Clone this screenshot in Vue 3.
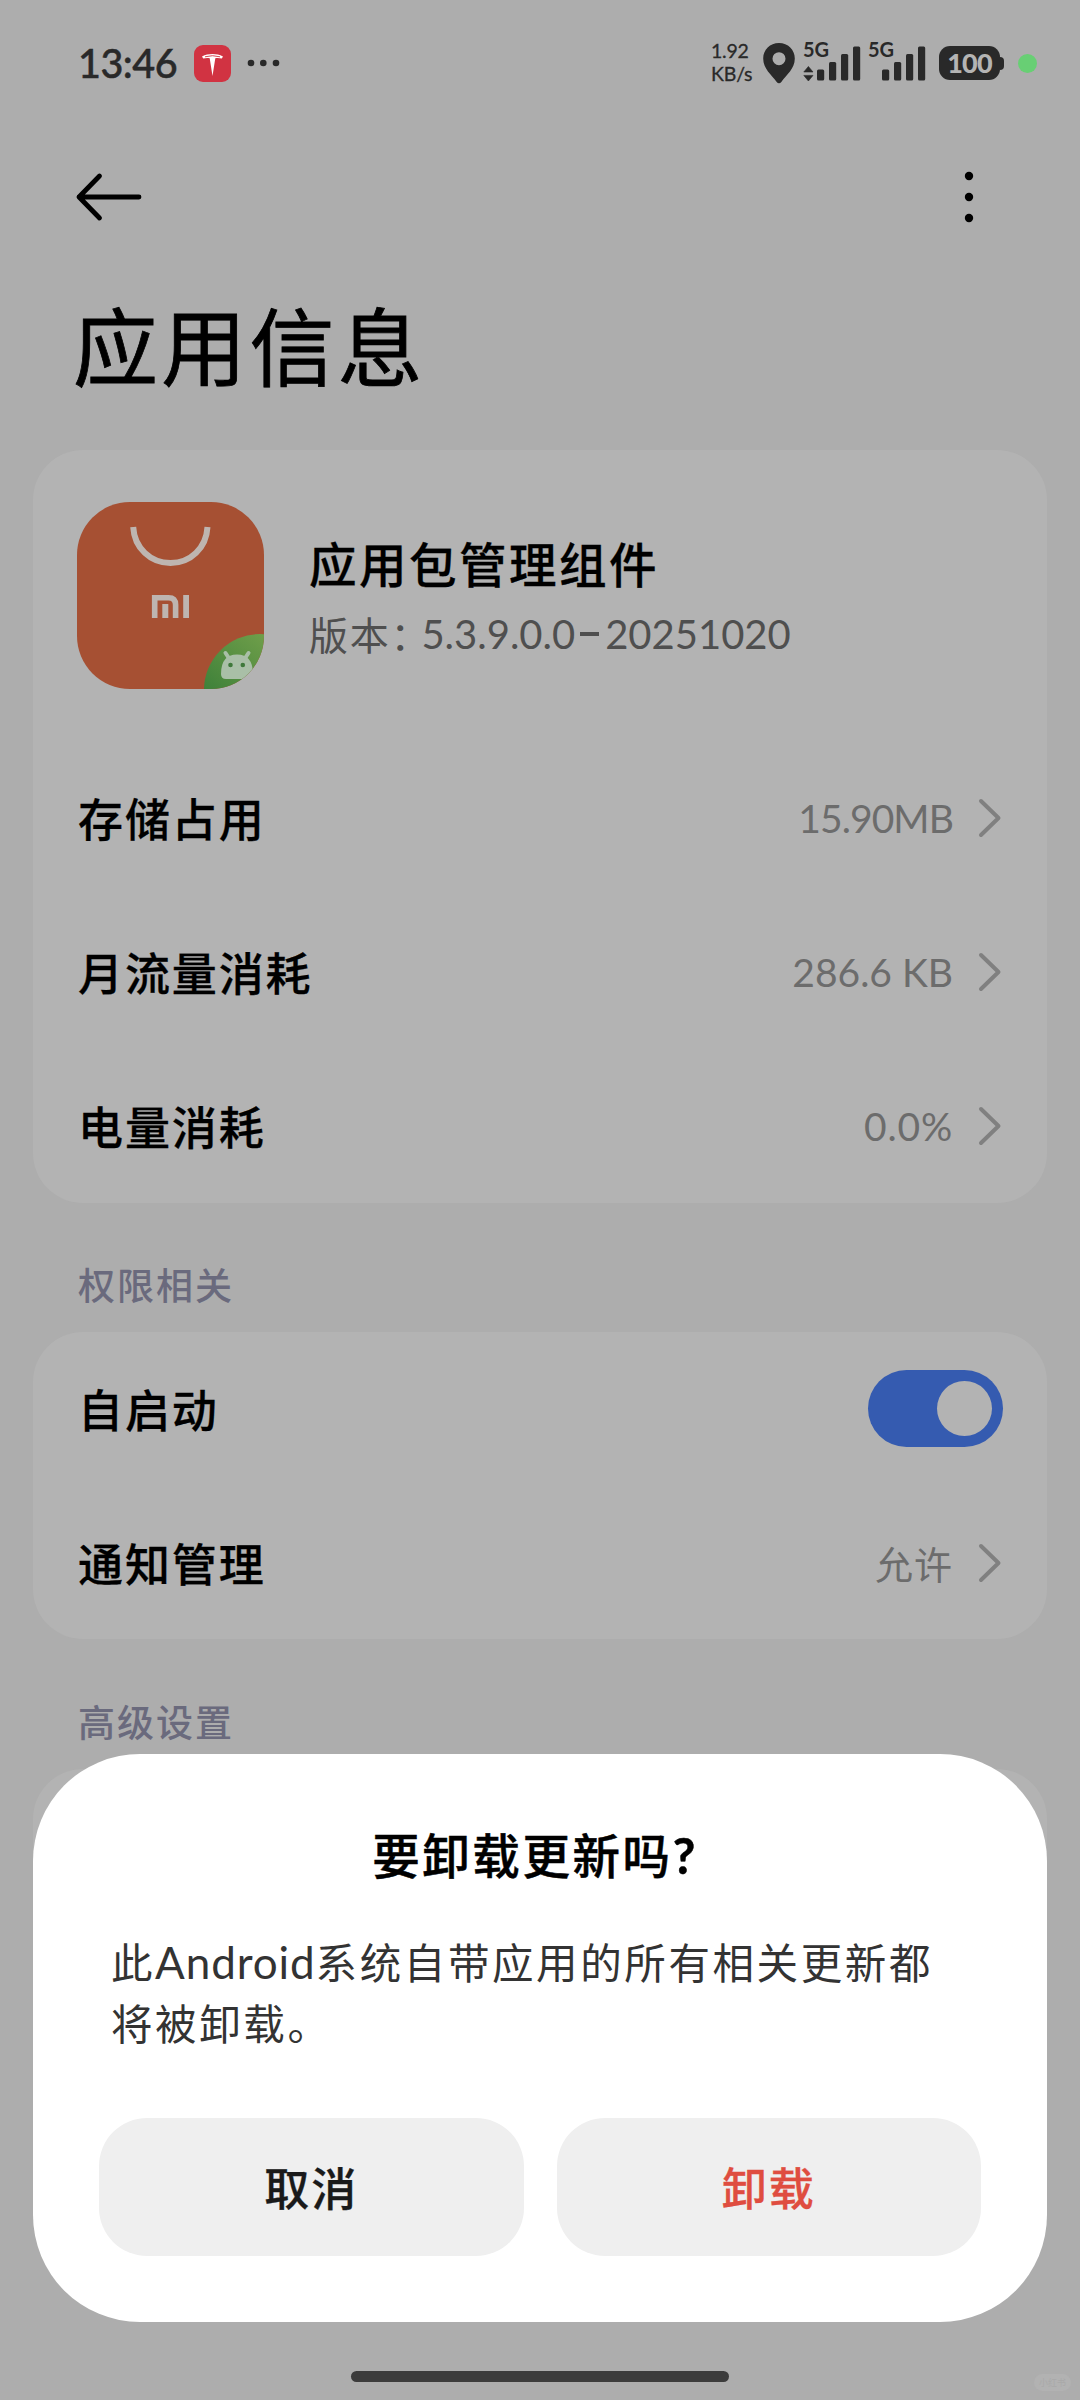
<script setup>
const usage = [
  { label: '存储占用', value: '15.90MB', spacing: '-0.9px' },
  { label: '月流量消耗', value: '286.6 KB', spacing: '0px' },
  { label: '电量消耗', value: '0.0%', spacing: '0.8px' },
]
const bars = [
  { x: 14, h: 11 },
  { x: 26, h: 18.5 },
  { x: 38, h: 26.5 },
  { x: 50, h: 34 },
]
</script>

<template>
  <div class="screen">
    <header class="status">
      <span class="time">13:46</span>
      <svg class="tesla" viewBox="0 0 37 37">
        <rect width="37" height="37" rx="9" fill="#d13342" />
        <path d="M8 11.4C14.5 8.2 22.5 8.2 29 11.4L27.8 13.6C25.6 12.9 23.4 12.8 21.3 13.2L18.5 31L15.7 13.2C13.6 12.8 11.4 12.9 9.2 13.6Z" fill="#fff" />
        <path d="M11 11.8Q18.5 9.6 26 11.8" fill="none" stroke="#d13342" stroke-width="0.9" />
      </svg>
      <svg class="more" viewBox="0 0 34 8">
        <circle cx="4" cy="4" r="3.3" /><circle cx="16.3" cy="4" r="3.3" /><circle cx="29" cy="4" r="3.3" />
      </svg>
      <div class="speed"><span>1.92</span><span>KB/s</span></div>
      <svg class="pin" viewBox="0 0 32 41">
        <path d="M16 0C7 0 0.2 6.8 0.2 15.5C0.2 26 8.5 31.5 13.7 39C15 40.8 17 40.8 18.3 39C23.5 31.5 31.8 26 31.8 15.5C31.8 6.8 25 0 16 0ZM16 9.2A6.5 6.5 0 1 1 16 22.2A6.5 6.5 0 1 1 16 9.2Z" fill-rule="evenodd" />
      </svg>
      <div class="signal">
        <span>5G</span>
        <svg viewBox="0 0 58 38">
          <path d="M0.8 29L5.4 23.4L10 29ZM0.8 32.4L5.4 38L10 32.4Z" stroke="#292929" stroke-linejoin="round" stroke-width="0.6" />
          <rect v-for="b in bars" :key="b.x" :x="b.x" :y="37.5 - b.h" width="7.2" :height="b.h" rx="1.5" />
        </svg>
      </div>
      <div class="signal second">
        <span>5G</span>
        <svg viewBox="0 0 58 38">
          <rect v-for="b in bars" :key="b.x" :x="b.x" :y="37.5 - b.h" width="7.2" :height="b.h" rx="1.5" />
        </svg>
      </div>
      <div class="battery"><span>100</span></div>
      <i class="tip"></i>
      <i class="live"></i>
    </header>

    <nav class="bar">
      <svg class="back" viewBox="0 0 66 48">
        <path d="M63 24H3M23.500 3L3 24L23.500 45" fill="none" stroke="#000" stroke-width="4.8" stroke-linecap="round" stroke-linejoin="round" />
      </svg>
      <svg class="menu" viewBox="0 0 10 52">
        <circle cx="5" cy="5" r="4.2" /><circle cx="5" cy="26" r="4.2" /><circle cx="5" cy="47" r="4.2" />
      </svg>
    </nav>

    <h1>应用信息</h1>

    <section class="card first">
      <div class="app">
        <svg class="logo" viewBox="0 0 187 187">
          <defs>
            <clipPath id="tile"><rect width="187" height="187" rx="53" /></clipPath>
            <linearGradient id="leaf" x1="0.1" y1="0.6" x2="0.6" y2="0">
              <stop offset="0" stop-color="#3d8039" /><stop offset="1" stop-color="#72a04b" />
            </linearGradient>
          </defs>
          <g clip-path="url(#tile)">
            <rect width="187" height="187" fill="#a65033" />
            <path d="M56.2 25C57.4 46 73.5 61 93.5 61S129.3 46 130.5 25" fill="none" stroke="#beb5b0" stroke-width="6" />
            <path d="M77.7 116V95.7H91.5Q98.6 95.7 98.6 102.8V116" fill="none" stroke="#beb5b0" stroke-width="5.6" />
            <rect x="85.3" y="102" width="6" height="14" fill="#beb5b0" />
            <rect x="106.2" y="93" width="5.8" height="23" fill="#beb5b0" />
            <circle cx="183" cy="188" r="56" fill="url(#leaf)" />
            <path d="M144 172Q144 152.500 160 152.500T176 172Q176 177 171 177H149Q144 177 144 172Z" fill="#a9bfa7" />
            <path d="M148.500 151L152.500 157M171.500 151L167.500 157" stroke="#a9bfa7" stroke-width="4" stroke-linecap="round" />
            <circle cx="153.500" cy="163" r="2.3" fill="#3f793b" /><circle cx="165.800" cy="163" r="2.3" fill="#3f793b" />
          </g>
        </svg>
        <div class="meta">
          <span class="name">应用包管理组件</span>
          <span class="version">版本：<b>5.3.9.0.0<i></i>20251020</b></span>
        </div>
      </div>
      <div v-for="r in usage" :key="r.label" class="row">
        <span class="label">{{ r.label }}</span>
        <span class="value" :style="{ letterSpacing: r.spacing }">{{ r.value }}</span>
        <svg class="chev" viewBox="0 0 22 38"><path d="M2 2L19.500 19L2 36" /></svg>
      </div>
    </section>

    <h2>权限相关</h2>

    <section class="card second-card">
      <div class="row">
        <span class="label">自启动</span>
        <span class="toggle"><i></i></span>
      </div>
      <div class="row">
        <span class="label">通知管理</span>
        <span class="value zh">允许</span>
        <svg class="chev" viewBox="0 0 22 38"><path d="M2 2L19.500 19L2 36" /></svg>
      </div>
    </section>

    <h2 class="adv">高级设置</h2>

    <section class="card rest"></section>

    <div class="dialog">
      <h3>要卸载更新吗<b>?</b></h3>
      <p>此<b>Android</b>系统自带应用的所有相关更新都<br />将被卸载。</p>
      <div class="actions">
        <button>取消</button>
        <button class="danger">卸载</button>
      </div>
    </div>
    <div class="home"></div>
    <div class="mark">小红书</div>
  </div>
</template>

<style>
body {
  margin: 0;
}
</style>

<style scoped>
.screen {
  position: relative;
  box-sizing: border-box;
  width: 1080px;
  height: 2400px;
  overflow: hidden;
  display: flex;
  flex-direction: column;
  background: #adadad;
  color: #000;
  font-family: "Noto Sans CJK SC", sans-serif;
}
svg {
  display: block;
  flex: none;
  overflow: visible;
}
.status {
  display: flex;
  align-items: center;
  height: 126px;
  padding-left: 78px;
  flex: none;
  color: #292929;
  fill: #292929;
  font-family: Lato, sans-serif;
}
.time {
  width: 116px;
  font-size: 39.500px;
  font-weight: 500;
  line-height: 48px;
  letter-spacing: -0.5px;
  white-space: nowrap;
  -webkit-text-stroke: 0.5px #292929;
}
.tesla {
  width: 37px;
  height: 37px;
}
.more {
  width: 34px;
  height: 8px;
  margin-left: 16px;
}
.speed {
  display: flex;
  flex-direction: column;
  width: 52px;
  margin: -3px 0 0 430px;
  font-size: 19.500px;
  line-height: 23px;
  letter-spacing: -0.2px;
  -webkit-text-stroke: 0.3px #292929;
}
.pin {
  width: 32px;
  height: 41px;
}
.signal {
  display: grid;
  width: 58px;
  height: 38px;
  margin-left: 8px;
}
.signal.second {
  margin-left: 7px;
}
.signal > * {
  grid-area: 1 / 1;
}
.signal span {
  margin-top: -4px;
  font-size: 20px;
  font-weight: 700;
  line-height: 18px;
}
.signal svg {
  width: 58px;
  height: 38px;
  margin-top: -1px;
}
.battery {
  display: flex;
  align-items: center;
  justify-content: center;
  width: 61px;
  height: 34px;
  margin-left: 13px;
  border-radius: 11px;
  background: #292929;
  color: #b4b4b4;
  font-size: 27px;
  font-weight: 900;
  line-height: 34px;
  letter-spacing: -0.8px;
}
.tip {
  width: 4px;
  height: 13px;
  border-radius: 0 4px 4px 0;
  background: #292929;
}
.live {
  width: 19px;
  height: 19px;
  margin-left: 14px;
  border-radius: 50%;
  background: #68cf74;
}
.bar {
  display: flex;
  align-items: center;
  justify-content: space-between;
  flex: none;
  height: 142px;
  padding: 0 106px 0 76px;
}
.back {
  width: 66px;
  height: 48px;
}
.menu {
  width: 10px;
  height: 52px;
}
h1 {
  flex: none;
  height: 182px;
  margin: 0 0 0 73px;
  font-size: 85px;
  font-weight: 400;
  line-height: 150px;
  letter-spacing: 3.200px;
  -webkit-text-stroke: 0.8px #000;
}
.card {
  flex: none;
  box-sizing: border-box;
  margin: 0 33px;
  border-radius: 50px;
  background: #b3b3b3;
}
.first {
  height: 753px;
  padding-top: 52px;
}
.app {
  display: flex;
  height: 239px;
  padding-left: 44px;
}
.logo {
  width: 187px;
  height: 187px;
}
.meta {
  display: flex;
  flex-direction: column;
  margin-left: 45px;
  padding-top: 26px;
}
.name {
  font-size: 47.500px;
  font-weight: 500;
  line-height: 70px;
  letter-spacing: 2.500px;
  -webkit-text-stroke: 0.3px #000;
}
.version {
  display: flex;
  align-items: center;
  height: 70px;
  color: #4f4f4f;
  font-size: 39px;
  line-height: 70px;
  letter-spacing: 1.800px;
  white-space: nowrap;
}
.version b {
  display: flex;
  align-items: center;
  margin: 2px 0 0 -10px;
  font-family: Lato, sans-serif;
  font-size: 40px;
  font-weight: 400;
  letter-spacing: 0;
}
.version i {
  width: 19px;
  height: 3.500px;
  margin: 0 6px 0 5px;
  background: #4f4f4f;
}
.row {
  display: flex;
  align-items: center;
  height: 154px;
  padding: 0 46px 0 45px;
}
.label {
  flex: 1;
  font-size: 45px;
  font-weight: 500;
  line-height: 66px;
  letter-spacing: 1.900px;
  -webkit-text-stroke: 0.3px #000;
}
.value {
  margin-right: 26px;
  color: #6c6c6c;
  font-family: Lato, sans-serif;
  font-size: 39px;
  line-height: 60px;
}
.value.zh {
  margin-right: 26px;
  font-family: "Noto Sans CJK SC", sans-serif;
  font-size: 38px;
  letter-spacing: 1px;
}
.chev {
  width: 22px;
  height: 38px;
  fill: none;
  stroke: #808080;
  stroke-width: 4;
  stroke-linecap: round;
  stroke-linejoin: round;
}
h2 {
  flex: none;
  height: 129px;
  margin: 0 0 0 78px;
  color: #6a6a7d;
  font-size: 37px;
  font-weight: 500;
  line-height: 162px;
  letter-spacing: 2px;
}
.adv {
  height: 130px;
  line-height: 164px;
}
.second-card {
  height: 307px;
}
.toggle {
  box-sizing: border-box;
  display: flex;
  justify-content: flex-end;
  width: 135px;
  height: 77px;
  margin: -2px -2px 0 0;
  padding: 11px;
  border-radius: 39px;
  background: #355bb0;
}
.toggle i {
  width: 55px;
  height: 55px;
  border-radius: 50%;
  background: #b3b3b3;
}
.rest {
  height: 460px;
}
.dialog {
  position: absolute;
  left: 33px;
  top: 1754px;
  box-sizing: border-box;
  width: 1014px;
  height: 568px;
  padding: 65px 66px 0;
  border-radius: 107px;
  background: #fff;
}
h3 {
  margin: 0 10px 0 0;
  font-size: 47.500px;
  font-weight: 500;
  line-height: 70px;
  letter-spacing: 2.600px;
  text-align: center;
  -webkit-text-stroke: 0.5px #000;
}
h3 b {
  font-family: Lato, sans-serif;
  font-size: 49px;
  line-height: 1;
}
p {
  margin: 42px 0 0 12px;
  color: #333;
  font-size: 41.500px;
  line-height: 61px;
  letter-spacing: 2.600px;
  white-space: nowrap;
}
p b {
  font-family: Lato, sans-serif;
  font-size: 44px;
  font-weight: 400;
  line-height: 1;
  letter-spacing: 0.900px;
}
.actions {
  display: flex;
  gap: 33px;
  margin-top: 65px;
}
button {
  flex: 1;
  height: 138px;
  padding: 0 0 2px;
  border: 0;
  border-radius: 48px;
  background: #efefef;
  color: #1a1a1a;
  font-family: inherit;
  font-size: 45px;
  font-weight: 500;
  letter-spacing: 2px;
  -webkit-text-stroke: 0.3px currentColor;
}
.danger {
  color: #df4d40;
}
.home {
  position: absolute;
  left: 351px;
  top: 2371px;
  width: 378px;
  height: 11px;
  border-radius: 6px;
  background: #3c3c3c;
}
.mark {
  position: absolute;
  right: 9px;
  bottom: 9px;
  width: 37px;
  height: 17px;
  border-radius: 9px;
  background: #b2b2b2;
  color: #a9a9a9;
  font-size: 9px;
  line-height: 17px;
  text-align: center;
}
</style>
